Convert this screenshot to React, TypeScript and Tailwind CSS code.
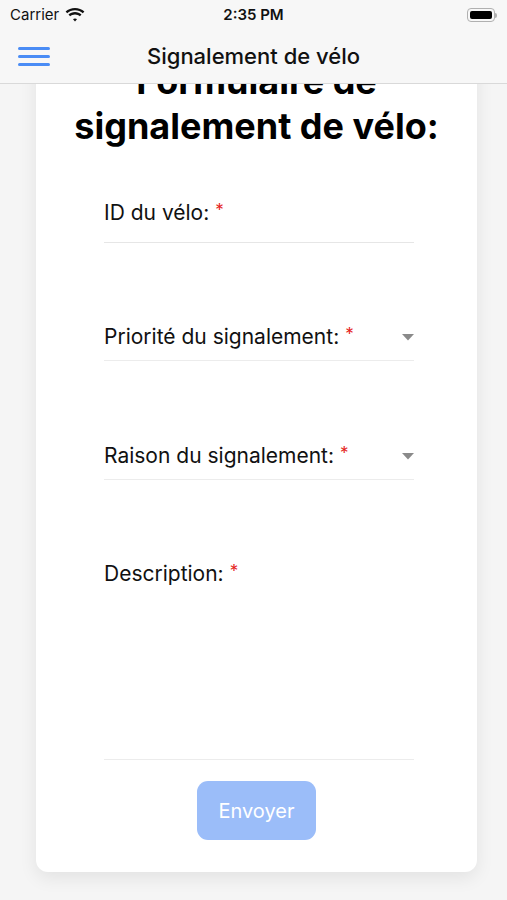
function WifiIcon() {
  return (
    <svg width="20" height="15" viewBox="0 0 20 15" fill="#111">
      <path d="M10 2.2c3 0 5.7 1.1 7.8 3l1.6-1.7C16.9 1.2 13.6 0 10 0S3.1 1.2.6 3.5L2.2 5.2c2.1-1.9 4.8-3 7.8-3z" />
      <path d="M10 6.4c1.9 0 3.6.7 4.9 1.8l1.6-1.7C14.8 5 12.5 4.1 10 4.1S5.2 5 3.5 6.5l1.6 1.7C6.4 7.1 8.1 6.4 10 6.4z" />
      <path d="M10 10.5c.8 0 1.5.3 2 .7L10 13.4 8 11.2c.5-.4 1.2-.7 2-.7z" />
    </svg>
  );
}

function Caret() {
  return (
    <svg width="12" height="7" viewBox="0 0 12 7" className="shrink-0">
      <path d="M0 0h12L6 6.5z" fill="#8a8a8a" />
    </svg>
  );
}

function Label({ text }: { text: string }) {
  return (
    <div className="flex h-[24px] text-[21px] leading-[24px] text-[#111]">
      <span>{text}</span>
      <span className="ml-[6px] mt-[1px] text-[17px] leading-[17px] text-[#e5241b]">*</span>
    </div>
  );
}

export default function App() {
  return (
    <div
      className="h-[900px] w-full bg-[#f5f5f5] flex flex-col overflow-hidden"
      style={{ fontFamily: 'Inter, "Noto Sans", sans-serif' }}
    >
      {/* status bar */}
      <div className="h-[30px] bg-[#f7f7f7] flex items-center px-[10px] text-[15px] text-[#111]">
        <div className="flex-1 flex items-center gap-[6px]">
          <span>Carrier</span>
          <WifiIcon />
        </div>
        <span className="font-semibold">2:35 PM</span>
        <div className="flex-1 flex justify-end">
          <div className="flex items-center">
            <div className="w-[28px] h-[14px] rounded-[4px] border border-[#b0b0b0] p-[2px]">
              <div className="w-full h-full rounded-[2px] bg-black" />
            </div>
            <div className="w-[2px] h-[5px] bg-[#b0b0b0] rounded-r-sm" />
          </div>
        </div>
      </div>

      {/* nav bar */}
      <div className="h-[54px] bg-[#f7f7f7] border-b border-[#d9d9d9] flex items-center relative z-10">
        <button className="ml-[18px] w-[32px] flex flex-col gap-[5.5px]">
          <span className="block h-[2.5px] bg-[#4a8cf5] rounded" />
          <span className="block h-[2.5px] bg-[#4a8cf5] rounded" />
          <span className="block h-[2.5px] bg-[#4a8cf5] rounded" />
        </button>
        <h1 className="flex-1 text-center text-[22px] font-medium text-[#111] mr-[50px]">
          Signalement de vélo
        </h1>
      </div>

      {/* content, scrolled so the card top sits under the nav bar */}
      <div className="flex-1 overflow-hidden pl-[36px] pr-[30px]">
        <div className="bg-white rounded-b-[12px] shadow-[0_6px_18px_rgba(0,0,0,0.08)] -mt-[40px] pt-[15px] pb-[32px]">
          <h2 className="text-center text-[36px] leading-[45px] font-bold text-black">
            Formulaire de
            <br />
            signalement de vélo:
          </h2>

          <div className="ml-[68px] mr-[63px]">
            <div className="mt-[52px] pb-[17px] border-b border-[#e6e6e6]">
              <Label text="ID du vélo:" />
            </div>

            <div className="mt-[82px] pb-[11px] border-b border-[#ececec] flex items-center justify-between">
              <Label text="Priorité du signalement:" />
              <Caret />
            </div>

            <div className="mt-[83px] pb-[11px] border-b border-[#ececec] flex items-center justify-between">
              <Label text="Raison du signalement:" />
              <Caret />
            </div>

            <div className="mt-[82px] pb-[173px] border-b border-[#ececec]">
              <Label text="Description:" />
            </div>
          </div>

          <div className="mt-[21px] flex justify-center">
            <button className="w-[119px] h-[59px] rounded-[11px] bg-[#9bbdf9] text-white text-[20px]">
              Envoyer
            </button>
          </div>
        </div>
      </div>
    </div>
  );
}
